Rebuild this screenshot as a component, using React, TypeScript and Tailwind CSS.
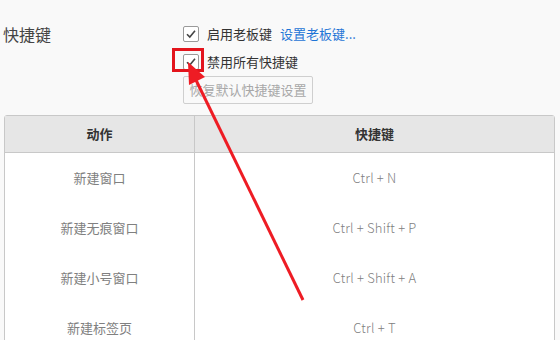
import React from "react";

const font = {fontFamily: '"Noto Sans CJK SC", "Open Sans", "Liberation Sans", sans-serif'};

const rows = [
    ["新建窗口", "Ctrl + N"],
    ["新建无痕窗口", "Ctrl + Shift + P"],
    ["新建小号窗口", "Ctrl + Shift + A"],
    ["新建标签页", "Ctrl + T"],
];

function Check() {
    return (
        <span className="w-4 h-4 border border-[#9a9a9a] bg-white rounded-[2px] flex items-center justify-center shrink-0">
            <svg width="12" height="12" viewBox="0 0 12 12">
                <path d="M2 6.2 L4.8 9 L10 2.8" fill="none" stroke="#444" strokeWidth="1.6"/>
            </svg>
        </span>
    );
}

export default function App() {
    return (
        <div className="relative w-[560px] h-[340px] overflow-hidden bg-[#f9f9f9] text-[13px]" style={font}>
            {/* settings block */}
            <div className="flex pt-[25px]">
                <div className="w-[183px] pl-[3px] text-[16px] text-[#444] leading-[20px] -mt-[1px]">快捷键</div>
                <div className="flex flex-col">
                    <div className="flex items-center gap-2 h-[18px]">
                        <Check/>
                        <span className="text-[#333]">启用老板键</span>
                        <span className="text-[#1f75d6]">设置老板键...</span>
                    </div>
                    <div className="flex items-center gap-2 h-[18px] mt-[10px]">
                        <Check/>
                        <span className="text-[#333]">禁用所有快捷键</span>
                    </div>
                    <button
                        className="mt-[5px] w-[130px] h-[28px] border border-[#cfcfcf] rounded-[2px] bg-[#f9f9f9] text-[#a8a8a8] text-[13px]"
                        disabled>
                        恢复默认快捷键设置
                    </button>
                </div>
            </div>

            {/* table */}
            <div className="ml-[4px] mt-[11px] w-[551px] border border-[#c8c8c8] rounded-t-[3px] bg-white">
                <div className="flex h-[37px] bg-[#e6e6e6] border-b border-[#c8c8c8] font-bold text-[#333]">
                    <div className="w-[190px] border-r border-[#c8c8c8] flex items-center justify-center">动作</div>
                    <div className="flex-1 flex items-center justify-center">快捷键</div>
                </div>
                {rows.map(([a, k]) => (
                    <div key={a} className="flex h-[50px] text-[#808080]">
                        <div className="w-[190px] border-r border-[#c8c8c8] flex items-center justify-center">{a}</div>
                        <div className="flex-1 flex items-center justify-center font-light tracking-[0.2px]">{k}</div>
                    </div>
                ))}
            </div>

            {/* annotation */}
            <svg className="absolute left-0 top-0 pointer-events-none" width="560" height="340">
                <rect x="173.5" y="49.5" width="29" height="21" fill="none" stroke="#e3141c" strokeWidth="3"/>
                <line x1="303" y1="300" x2="195" y2="78" stroke="#ee1c24" strokeWidth="3"/>
                <polygon points="188,62 205,77 189,85" fill="#ee1c24"/>
            </svg>
        </div>
    );
}
